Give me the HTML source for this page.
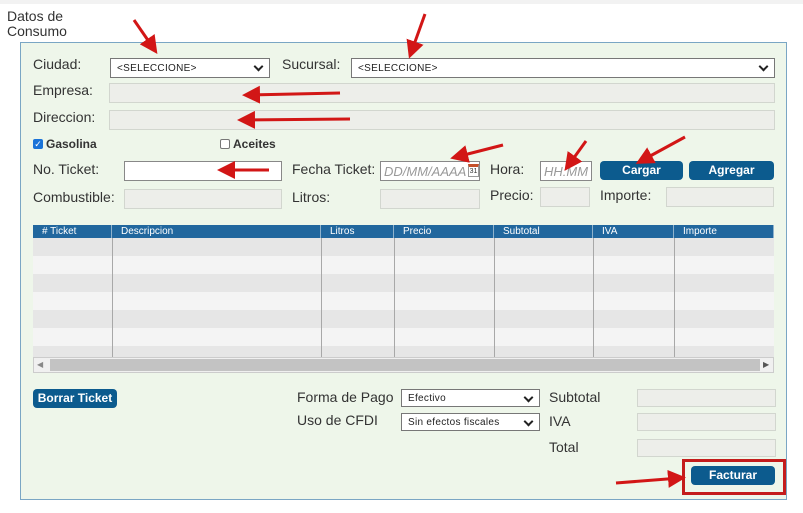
<!DOCTYPE html>
<html><head><meta charset="utf-8"><style>
*{box-sizing:border-box;margin:0;padding:0}
body{width:803px;height:513px;background:#fff;position:relative;overflow:hidden;font-family:"Liberation Sans",Arial,sans-serif;color:#333}
.a{position:absolute}
.top{left:0;top:0;width:803px;height:4px;background:#f2f2f2}
.panel{left:20px;top:42px;width:767px;height:458px;background:#eef6ea;border:1px solid #7aa6c4}
.l{position:absolute;font-size:14px;color:#333}
.in{position:absolute;height:20px;border:1px solid #d2d6cf;background:#edeeea}
.w{background:#fff;border:1px solid #888}
.sel{position:absolute;height:20px;border:1px solid #777;background:#fff;font-size:10px;padding:4px 0 0 6px;color:#222;letter-spacing:.3px}
.sel:after{content:"";position:absolute;right:7px;top:4px;width:5px;height:5px;border-right:2px solid #222;border-bottom:2px solid #222;transform:rotate(45deg)}
.btn{position:absolute;height:19px;background:#0c5b8e;border-radius:4px;color:#fff;font-size:12px;font-weight:bold;text-align:center;line-height:19px}
.ph{font-style:italic;color:#999;font-size:13px;padding:2px 0 0 3px;overflow:hidden;white-space:nowrap}
.th{position:absolute;top:225px;height:13px;background:#21679e;color:#fff;font-size:10px;line-height:13px;padding-left:9px;border-right:1px solid #8fb2cc}
.vl{position:absolute;top:238px;width:1px;height:119px;background:#a8a8a8}
</style></head><body>
<div class="a top"></div>
<div class="a" style="left:7px;top:9px;font-size:14px;line-height:15px;color:#333">Datos de<br>Consumo</div>
<div class="a panel"></div>
<div class="l" style="left:33px;top:56px">Ciudad:</div>
<div class="sel" style="left:110px;top:58px;width:160px">&lt;SELECCIONE&gt;</div>
<div class="l" style="left:282px;top:56px">Sucursal:</div>
<div class="sel" style="left:351px;top:58px;width:424px">&lt;SELECCIONE&gt;</div>
<div class="l" style="left:33px;top:82px">Empresa:</div>
<div class="in" style="left:109px;top:83px;width:666px"></div>
<div class="l" style="left:33px;top:109px">Direccion:</div>
<div class="in" style="left:109px;top:110px;width:666px"></div>
<div class="a" style="left:33px;top:139px;width:10px;height:10px;background:#1a73d8;border-radius:2px;color:#fff;font-size:9px;line-height:10px;text-align:center">✓</div>
<div class="l" style="left:46px;top:137px;font-size:12px;font-weight:bold">Gasolina</div>
<div class="a" style="left:220px;top:139px;width:10px;height:10px;border:1px solid #777;background:#fff;border-radius:2px"></div>
<div class="l" style="left:233px;top:137px;font-size:12px;font-weight:bold">Aceites</div>
<div class="l" style="left:33px;top:161px">No. Ticket:</div>
<div class="in w" style="left:124px;top:161px;width:158px"></div>
<div class="l" style="left:292px;top:161px">Fecha Ticket:</div>
<div class="in w ph" style="left:380px;top:161px;width:100px">DD/MM/AAAA</div>
<div class="a" style="left:468px;top:164px;width:11px;height:13px;background:#fff;border:1px solid #999;border-top:3px solid #c5502a;font-size:7px;line-height:9px;text-align:center">31</div>
<div class="l" style="left:490px;top:161px">Hora:</div>
<div class="in w ph" style="left:540px;top:161px;width:52px">HH:MM</div>
<div class="btn" style="left:600px;top:161px;width:83px">Cargar</div>
<div class="btn" style="left:689px;top:161px;width:85px">Agregar</div>
<div class="l" style="left:33px;top:189px">Combustible:</div>
<div class="in" style="left:124px;top:189px;width:158px"></div>
<div class="l" style="left:292px;top:189px">Litros:</div>
<div class="in" style="left:380px;top:189px;width:100px"></div>
<div class="l" style="left:490px;top:187px">Precio:</div>
<div class="in" style="left:540px;top:187px;width:50px"></div>
<div class="l" style="left:600px;top:187px">Importe:</div>
<div class="in" style="left:666px;top:187px;width:108px"></div>
<!-- grid -->
<div class="a" style="left:33px;top:238px;width:741px;height:119px;background:repeating-linear-gradient(#e6e6e6 0 18px,#f4f4f4 18px 36px)"></div>
<div class="th" style="left:33px;width:79px"># Ticket</div>
<div class="th" style="left:112px;width:209px">Descripcion</div>
<div class="th" style="left:321px;width:73px">Litros</div>
<div class="th" style="left:394px;width:100px">Precio</div>
<div class="th" style="left:494px;width:99px">Subtotal</div>
<div class="th" style="left:593px;width:81px">IVA</div>
<div class="th" style="left:674px;width:100px">Importe</div>
<div class="vl" style="left:112px"></div><div class="vl" style="left:321px"></div><div class="vl" style="left:394px"></div><div class="vl" style="left:494px"></div><div class="vl" style="left:593px"></div><div class="vl" style="left:674px"></div>
<div class="a" style="left:33px;top:357px;width:741px;height:16px;background:#f0f0f0;border:1px solid #ccc"></div>
<div class="a" style="left:50px;top:359px;width:710px;height:12px;background:#c3c3c3"></div>
<div class="a" style="left:37px;top:360px;font-size:8px;color:#888">◀</div>
<div class="a" style="left:763px;top:360px;font-size:8px;color:#555">▶</div>
<div class="btn" style="left:33px;top:389px;width:84px">Borrar Ticket</div>
<div class="l" style="left:297px;top:389px">Forma de Pago</div>
<div class="sel" style="left:401px;top:389px;width:139px;height:18px;padding-top:3px">Efectivo</div>
<div class="l" style="left:297px;top:412px">Uso de CFDI</div>
<div class="sel" style="left:401px;top:413px;width:139px;height:18px;padding-top:3px">Sin efectos fiscales</div>
<div class="l" style="left:549px;top:389px">Subtotal</div>
<div class="in" style="left:637px;top:389px;width:139px;height:18px"></div>
<div class="l" style="left:549px;top:413px">IVA</div>
<div class="in" style="left:637px;top:413px;width:139px;height:18px"></div>
<div class="l" style="left:549px;top:439px">Total</div>
<div class="in" style="left:637px;top:439px;width:139px;height:18px"></div>
<div class="btn" style="left:691px;top:466px;width:84px">Facturar</div>
<div class="a" style="left:682px;top:459px;width:104px;height:36px;border:3px solid #c41c1c"></div>
<svg class="a" style="left:0;top:0" width="803" height="513">
<defs><marker id="m" markerWidth="6" markerHeight="6" refX="4" refY="3" orient="auto"><path d="M0,0 L6,3 L0,6 Z" fill="#d21616"/></marker></defs>
<g stroke="#d21616" stroke-width="3" fill="none" marker-end="url(#m)">
<line x1="134" y1="20" x2="154" y2="49"/>
<line x1="425" y1="14" x2="411" y2="53"/>
<line x1="340" y1="93" x2="248" y2="95"/>
<line x1="350" y1="119" x2="243" y2="120"/>
<line x1="269" y1="170" x2="223" y2="170"/>
<line x1="503" y1="145" x2="456" y2="157"/>
<line x1="586" y1="141" x2="568" y2="166"/>
<line x1="685" y1="137" x2="641" y2="161"/>
<line x1="616" y1="483" x2="680" y2="478"/>
</g></svg>
</body></html>
